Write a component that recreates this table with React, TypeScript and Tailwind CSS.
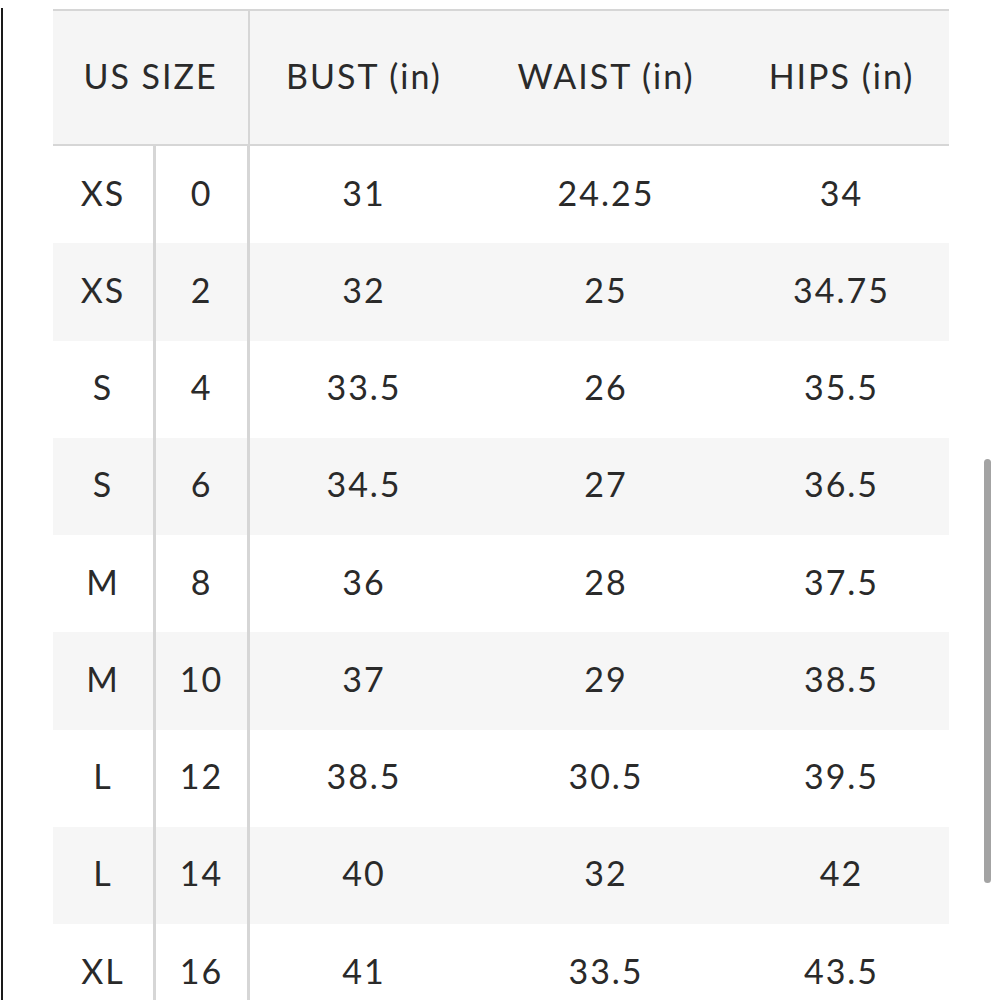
import React from 'react';

const rows: [string, string, string, string, string][] = [
  ['XS', '0', '31', '24.25', '34'],
  ['XS', '2', '32', '25', '34.75'],
  ['S', '4', '33.5', '26', '35.5'],
  ['S', '6', '34.5', '27', '36.5'],
  ['M', '8', '36', '28', '37.5'],
  ['M', '10', '37', '29', '38.5'],
  ['L', '12', '38.5', '30.5', '39.5'],
  ['L', '14', '40', '32', '42'],
  ['XL', '16', '41', '33.5', '43.5'],
];

export default function App() {
  return (
    <div
      className="relative h-[1000px] w-[1000px] overflow-hidden bg-white text-[#2a2a2a] text-[34px] tracking-[2px]"
      style={{ fontFamily: 'Lato, "Open Sans", sans-serif' }}
    >
      <div className="ml-[1px] mt-[8px] h-[992px] border-l-2 border-[#1a1a1a] pl-[50px] pt-[1px]">
        <div className="w-[896px]">
          {/* Header */}
          <div className="grid h-[137px] grid-cols-[197px_228px_256px_215px] border-y-2 border-[#d6d6d6] bg-[#f5f5f5]">
            <div className="flex items-center justify-center border-r-2 border-[#d6d6d6] pb-[4px]">US SIZE</div>
            <div className="flex items-center justify-center pb-[4px]">BUST (in)</div>
            <div className="flex items-center justify-center pb-[4px]">WAIST (in)</div>
            <div className="flex items-center justify-center pb-[4px]">HIPS (in)</div>
          </div>

          {/* Body */}
          {rows.map((r, i) => (
            <div
              key={i}
              className={`grid h-[97.25px] grid-cols-[100px_97px_228px_256px_215px] ${
                i % 2 === 1 ? 'bg-[#f6f6f6]' : 'bg-white'
              }`}
            >
              <div className="flex items-center justify-center pb-[5px]">{r[0]}</div>
              <div className="flex items-center justify-center border-x-[3px] border-[#d6d6d6] pb-[5px]">{r[1]}</div>
              <div className="flex items-center justify-center pb-[5px]">{r[2]}</div>
              <div className="flex items-center justify-center pb-[5px]">{r[3]}</div>
              <div className="flex items-center justify-center pb-[5px]">{r[4]}</div>
            </div>
          ))}
        </div>
      </div>

      {/* scrollbar */}
      <div className="absolute left-[984px] top-[459px] h-[424px] w-[7px] rounded-full bg-[#a3a3a3]" />
    </div>
  );
}
